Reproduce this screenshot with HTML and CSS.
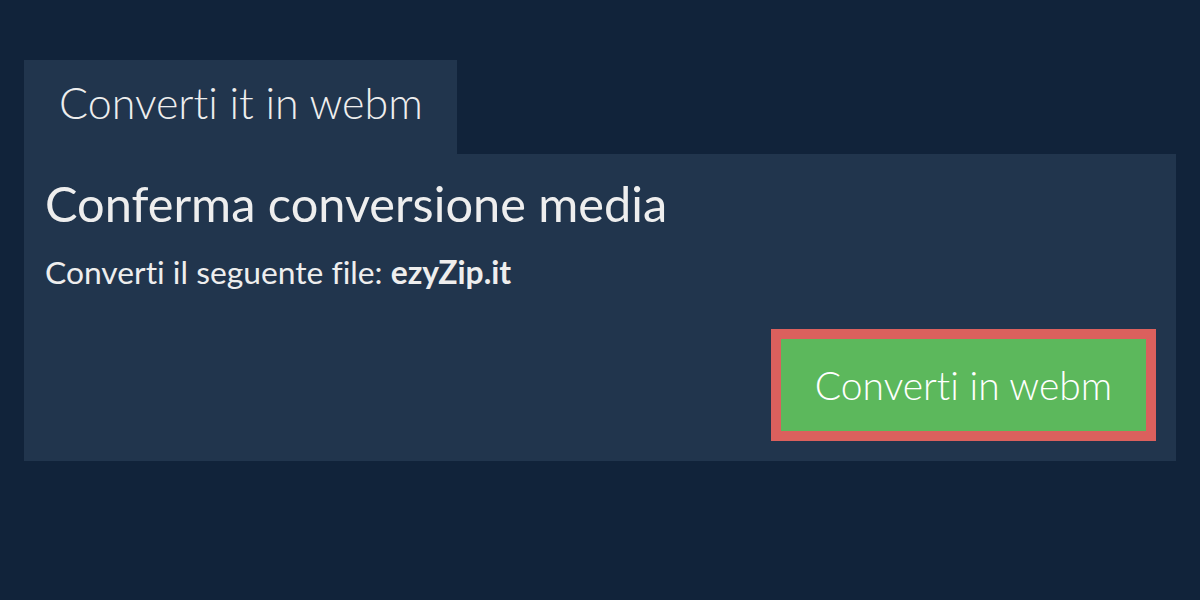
FILE: index.html
```html
<!doctype html>
<html>
<head>
  <meta charset="utf-8">
  <title>Converti it in webm</title>
  <link rel="stylesheet" href="styles.css">
</head>
<body>
  <div class="tab">Converti it in webm</div>
  <div class="panel">
    <h1>Conferma conversione media</h1>
    <p class="file-line">Converti il seguente file: <b>ezyZip.it</b></p>
    <div class="actions">
      <button class="convert-btn">Converti in webm</button>
    </div>
  </div>
</body>
</html>
```

FILE: styles.css
```css
/* ========== Base ========== */
body {
  margin: 0;
  padding: 60px 24px;
  background: #11233a;
  color: #eeeeee;
  font-family: Lato, "Noto Sans", sans-serif;
  font-variant-ligatures: no-common-ligatures;
}

/* ========== Tab ========== */
.tab {
  display: inline-block;
  width: 433px;
  height: 94px;
  box-sizing: border-box;
  padding: 18px 0 0 35px;
  background: #21354d;
  font-size: 43px;
  font-weight: 300;
  line-height: 50px;
}

/* ========== Panel ========== */
.panel {
  background: #21354d;
  padding: 20px 20px 20px 21px;
  height: 307px;
  box-sizing: border-box;
}

.panel h1 {
  margin: 0;
  font-size: 48.7px;
  font-weight: 400;
  line-height: 58px;
}

.file-line {
  margin: 21px 0 0;
  font-size: 31.8px;
  line-height: 38px;
}

.file-line b {
  font-weight: 700;
}

/* ========== Button ========== */
.actions {
  display: flex;
  justify-content: flex-end;
  margin-top: 38px;
}

.convert-btn {
  width: 385px;
  height: 112px;
  background: #5cb85c;
  border: 10px solid #db605d;
  color: #ffffff;
  font-family: Lato, "Noto Sans", sans-serif;
  font-variant-ligatures: no-common-ligatures;
  font-size: 39px;
  font-weight: 300;
  cursor: pointer;
}
```
